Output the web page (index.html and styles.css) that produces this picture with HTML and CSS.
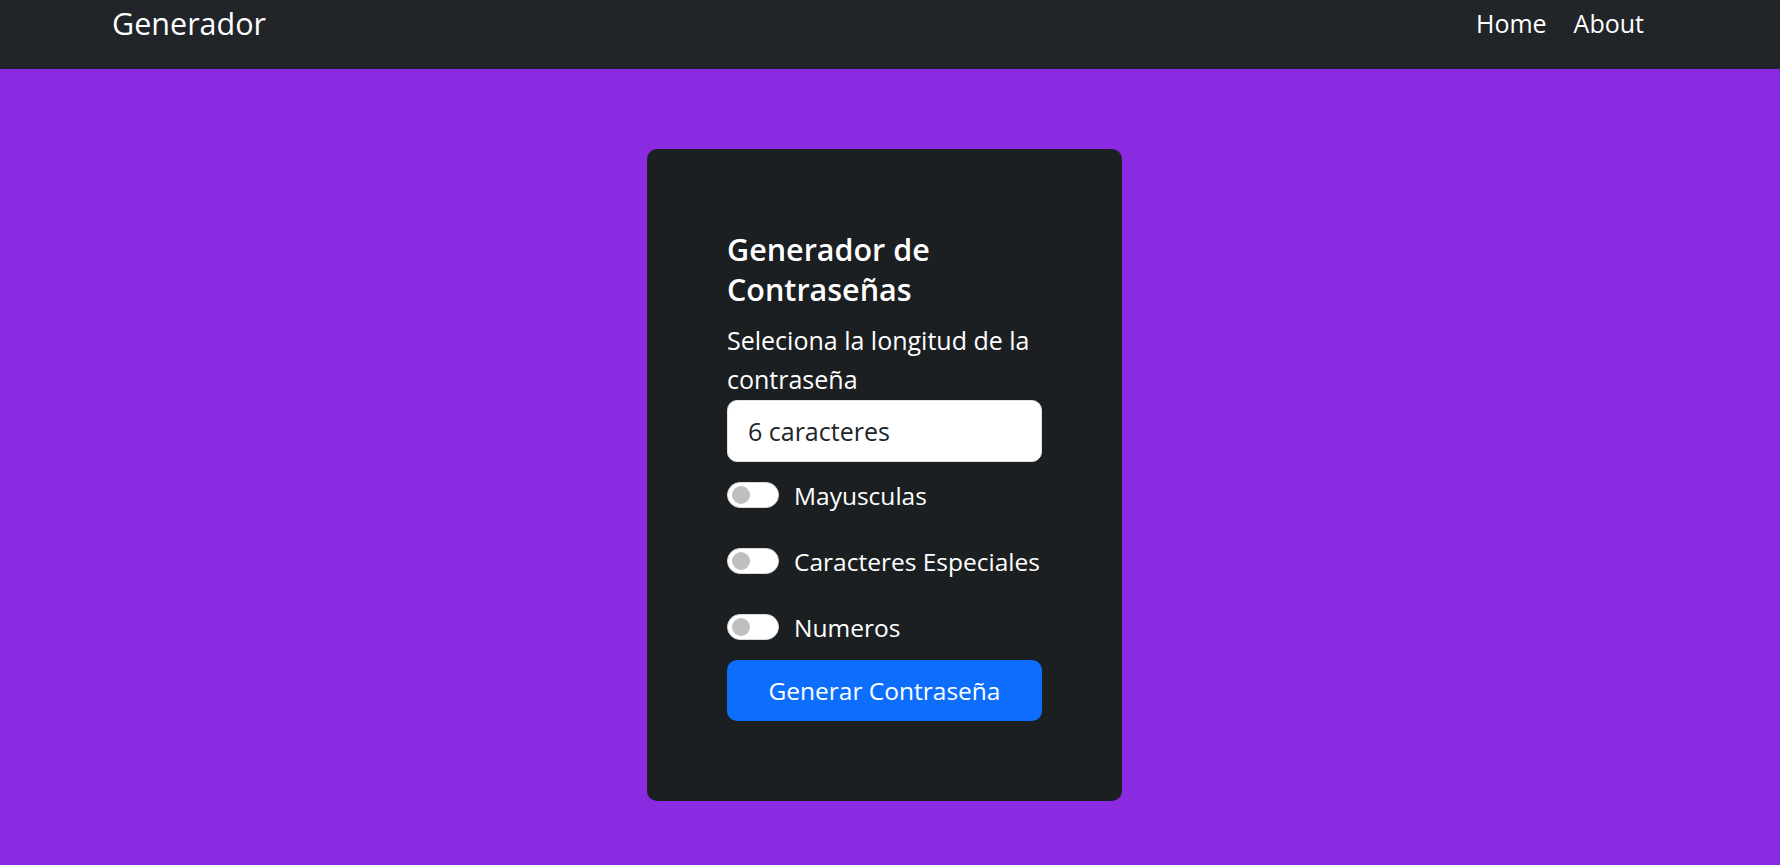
FILE: index.html
```html
<!DOCTYPE html>
<html lang="es">
<head>
<meta charset="utf-8">
<title>Generador</title>
<link rel="stylesheet" href="styles.css">
</head>
<body>
<nav class="navbar">
  <a class="brand" href="#">Generador</a>
  <ul class="nav-links">
    <li><a href="#">Home</a></li>
    <li><a href="#">About</a></li>
  </ul>
</nav>
<main class="page">
  <section class="card">
    <h3 class="title">Generador de Contraseñas</h3>
    <label class="length-label" for="len">Seleciona la longitud de la contraseña</label>
    <div class="select-box" id="len">6 caracteres</div>
    <div class="options">
      <div class="option"><span class="switch"><span class="knob"></span></span><span class="option-label">Mayusculas</span></div>
      <div class="option"><span class="switch"><span class="knob"></span></span><span class="option-label">Caracteres Especiales</span></div>
      <div class="option"><span class="switch"><span class="knob"></span></span><span class="option-label">Numeros</span></div>
    </div>
    <button class="btn-generate">Generar Contraseña</button>
  </section>
</main>
</body>
</html>
```
FILE: styles.css
```css
html, body {
  margin: 0;
  padding: 0;
}
body {
  background: #8a2be2;
  font-family: "Open Sans", "Noto Sans", sans-serif;
  color: #fff;
  min-height: 865px;
}
.navbar {
  height: 69px;
  background: #212529;
  display: flex;
  justify-content: space-between;
  align-items: flex-start;
  padding: 0 136px 0 112px;
  box-sizing: border-box;
}
.brand {
  color: #fff;
  text-decoration: none;
  font-size: 30.5px;
  line-height: 45px;
  margin-top: 1px;
}
.nav-links {
  list-style: none;
  margin: 0;
  padding: 0;
  display: flex;
  gap: 27px;
  margin-top: 5px;
}
.nav-links a {
  color: #fff;
  text-decoration: none;
  font-size: 25px;
  line-height: 37px;
}
.page {
  display: flex;
  justify-content: center;
  padding: 80px 11px 0 0;
}
.card {
  width: 475px;
  box-sizing: border-box;
  background: #1c1f22;
  border-radius: 10px;
  padding: 80px;
  display: flex;
  flex-direction: column;
}
.title {
  margin: 0 0 12px;
  font-size: 30.5px;
  line-height: 40px;
  font-weight: 600;
}
.length-label {
  font-size: 25px;
  line-height: 39px;
  margin-bottom: 1px;
}
.select-box {
  height: 62px;
  box-sizing: border-box;
  background: #fff;
  border: 1px solid #dee2e6;
  border-radius: 10px;
  padding: 0 20px;
  display: flex;
  align-items: center;
  color: #212529;
  font-size: 25px;
}
.options {
  display: flex;
  flex-direction: column;
  gap: 27px;
  margin: 13.5px 0;
}
.option {
  display: flex;
  align-items: center;
  height: 39px;
}
.switch {
  flex: none;
  width: 52px;
  height: 26px;
  box-sizing: border-box;
  background: #fff;
  border: 1px solid #d8d8d8;
  border-radius: 13px;
  display: flex;
  align-items: center;
  padding-left: 4px;
}
.knob {
  width: 18px;
  height: 18px;
  border-radius: 50%;
  background: #bfbfbf;
}
.option-label {
  margin-left: 15px;
  font-size: 24.5px;
  line-height: 39px;
  white-space: nowrap;
}
.btn-generate {
  height: 61px;
  background: #0d6efd;
  border: none;
  border-radius: 10px;
  color: #fff;
  font-family: inherit;
  font-size: 24.5px;
  padding: 0;
  cursor: pointer;
}
```
